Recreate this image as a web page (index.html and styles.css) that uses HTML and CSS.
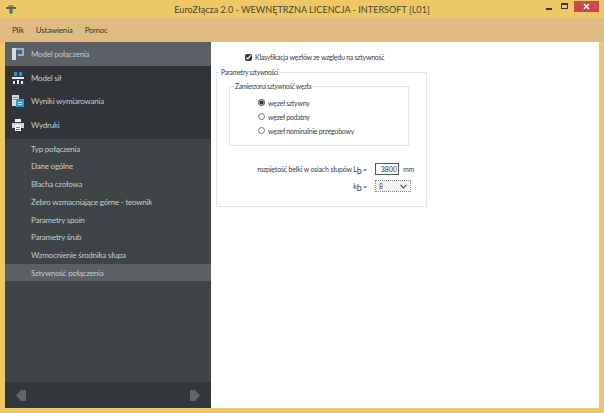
FILE: index.html
```html
<!DOCTYPE html>
<html lang="pl">
<head>
<meta charset="utf-8">
<title>EuroZłącza 2.0</title>
<link rel="stylesheet" href="styles.css">
</head>
<body>
<div class="window">
  <header class="titlebar">
    <svg class="app-icon" width="10" height="9" viewBox="0 0 10 9"><path d="M0 2h10v2H6.500v4L5 9 3.500 8V4H0z" fill="#5b6a5e"/><path d="M2.500 0h5v2h-5z" fill="#7d8a70"/></svg>
    <span class="title">EuroZłącza 2.0 - WEWNĘTRZNA LICENCJA - INTERSOFT [L01]</span>
    <div class="controls">
      <span class="min"></span>
      <span class="max"></span>
      <span class="close">
        <svg width="7" height="7" viewBox="0 0 7 7"><path d="M1 1l5 5M6 1L1 6" stroke="#fff" stroke-width="1.5"/></svg>
      </span>
    </div>
  </header>
  <nav class="menubar">
    <span>Plik</span><span>Ustawienia</span><span>Pomoc</span>
  </nav>
  <div class="body">
    <aside class="sidebar">
      <ul class="main-nav">
        <li class="active">
          <svg viewBox="0 0 12 12"><path d="M0 0h4v12H0z" fill="#d5dbe0"/><path d="M4 0h8v8H6V6h4V2H4z" fill="#8fb4d2"/></svg>
          Model połączenia
        </li>
        <li>
          <svg viewBox="0 0 12 12"><path d="M2 0h3v4H2zM7 0h3v4H7z" fill="#2f8fd0"/><path d="M0 5h12v2H0zM1 9h2v3H1zM9 9h2v3H9zM5 8h2v4H5z" fill="#e8ecef"/></svg>
          Model sił
        </li>
        <li>
          <svg viewBox="0 0 12 12"><path d="M0 0h7v11H0z" fill="#d5dbe0"/><path d="M1 2h5v1H1zM1 4h3v1H1z" fill="#8d959b"/><path d="M4 4h8v8H4z" fill="#2f9ad8"/><path d="M6 7h4v1H6zM6 9h4v1H6z" fill="#bfe3f7"/></svg>
          Wyniki wymiarowania
        </li>
        <li>
          <svg viewBox="0 0 12 12"><path d="M3 0h6v3H3z" fill="#f2f4f5"/><path d="M0 4h12v5H0z" fill="#cfd5d9"/><path d="M3 6h6v6H3z" fill="#fff"/><path d="M4 8h4v1H4zM4 10h4v1H4z" fill="#7a8288"/></svg>
          Wydruki
        </li>
      </ul>
      <ul class="sub-nav">
        <li>Typ połączenia</li>
        <li>Dane ogólne</li>
        <li>Blacha czołowa</li>
        <li>Żebro wzmacniające górne - teownik</li>
        <li>Parametry spoin</li>
        <li>Parametry śrub</li>
        <li>Wzmocnienie środnika słupa</li>
        <li class="active">Sztywność połączenia</li>
      </ul>
      <div class="pager">
        <svg width="10" height="11" viewBox="0 0 10 11"><path d="M0 5.500L5 0h5v11H5z" fill="#5f6569"/></svg>
        <svg width="10" height="11" viewBox="0 0 10 11"><path d="M10 5.500L5 0H0v11h5z" fill="#5f6569"/></svg>
      </div>
    </aside>
    <main class="content">
      <label class="classify"><input type="checkbox" checked> Klasyfikacja węzłów ze względu na sztywność</label>
      <fieldset class="group outer">
        <legend>Parametry sztywności</legend>
        <fieldset class="group inner">
          <legend>Zamierzona sztywność węzła</legend>
          <label class="radio"><input type="radio" name="s" checked> węzeł sztywny</label>
          <label class="radio"><input type="radio" name="s"> węzeł podatny</label>
          <label class="radio"><input type="radio" name="s"> węzeł nominalnie przegubowy</label>
        </fieldset>
        <div class="form-row">
          <span class="field-label">rozpiętość belki w osiach słupów L<sub>b</sub> =</span>
          <input class="num" type="text" value="3800">
          <span class="unit">mm</span>
        </div>
        <div class="form-row">
          <span class="field-label">k<sub>b</sub> =</span>
          <span class="select">8<svg width="7" height="5" viewBox="0 0 7 5"><path d="M.5 .8l3 3 3-3" fill="none" stroke="#555" stroke-width="1.2"/></svg></span>
        </div>
      </fieldset>
    </main>
  </div>
</div>
</body>
</html>
```
FILE: styles.css
```css
* { box-sizing: border-box; }
html, body { margin: 0; height: 100%; }
body { font-family: Lato, "Open Sans", sans-serif; font-size: 8px; color: #333; overflow: hidden; }
ul { list-style: none; margin: 0; padding: 0; }

.window { width: 604px; height: 413px; display: flex; flex-direction: column; background: #eec866; padding: 0 5px 5px; }

.titlebar { height: 18px; margin: 0 -5px; padding: 0 0 0 6px; display: flex; align-items: center; position: relative; background: #eec866; }
.app-icon { flex: none; }
.title { position: absolute; left: 0; right: 0; top: 3px; text-align: center; font-size: 9.1px; line-height: 14px; color: #4d4530; }
.controls { margin-left: auto; margin-right: 5px; display: flex; align-items: flex-start; align-self: flex-start; }
.min { width: 6px; height: 2px; background: #3b3626; margin-top: 8px; margin-right: 9px; }
.max { width: 7px; height: 6px; border: 1px solid #3b3626; border-top-width: 2px; margin-top: 3px; margin-right: 6px; }
.close { width: 25px; height: 11px; background: #c9484e; display: flex; align-items: center; justify-content: center; margin-top: 1px; }

.menubar { height: 24px; margin: 0 -5px; padding: 0 0 0 12px; display: flex; align-items: center; gap: 12px; background: #e0bb82; font-size: 8px; letter-spacing: -0.2px; color: #3d3626; }

.body { flex: 1; display: flex; min-height: 0; }
.sidebar { width: 206px; display: flex; flex-direction: column; background: #3f4447; color: #c6cacc; font-size: 8px; letter-spacing: -0.22px; }
.main-nav { background: #313539; padding-bottom: 2px; }
.main-nav li { height: 23.7px; display: flex; align-items: center; gap: 7px; padding-left: 7px; }
.main-nav svg { flex: none; width: 12px; height: 12px; }
.main-nav .active { background: #5a6064; }
.sub-nav { flex: 1; padding-top: 1px; }
.sub-nav li { height: 17.7px; line-height: 18.7px; padding-left: 26px; }
.sub-nav .active { background: #5a6064; }
.pager { height: 26px; display: flex; align-items: center; justify-content: space-between; padding: 0 11px; background: #33373b; }

.content { flex: 1; background: #fff; padding: 9px 0 0 5px; font-size: 7px; letter-spacing: -0.25px; color: #3c3c3c; }
.classify { display: flex; align-items: center; gap: 3px; margin-left: 29px; height: 12px; }
.classify input { margin: 0; width: 7px; height: 7px; accent-color: #333; }

.group { border: 1px solid #e4e4e4; margin: 0; padding: 0; min-width: 0; }
.group legend { padding: 0 1px; line-height: 10px; font-size: 6.6px; letter-spacing: -0.3px; }
.outer { width: 211px; height: 140px; margin-top: 4px; padding: 0 0 0 12px; }
.outer > legend { margin-left: -9px; }
.inner { width: 180px; height: 65px; margin-top: 4px; padding: 4.5px 0 0 28px; }
.inner > legend { margin-left: -24px; }
.radio { display: flex; align-items: center; gap: 3px; height: 14px; }
.radio input { margin: 0; width: 7px; height: 7px; accent-color: #333; }

.form-row { display: flex; align-items: center; height: 17.5px; }
.inner + .form-row { margin-top: 14px; }
.field-label { width: 138px; text-align: right; white-space: nowrap; letter-spacing: -0.18px; }
.field-label sub { font-size: 9px; line-height: 0; }
.num { width: 24px; height: 12px; margin: 0 0 0 8px; padding: 0 1px; border: 1px solid #555; font: inherit; text-align: right; color: #333; }
.unit { margin-left: 4px; }
.select { width: 36px; height: 12px; margin-left: 8px; padding: 0 3px; display: flex; align-items: center; justify-content: space-between; border: 1px dotted #888; background: #f4f4f4; }
```
